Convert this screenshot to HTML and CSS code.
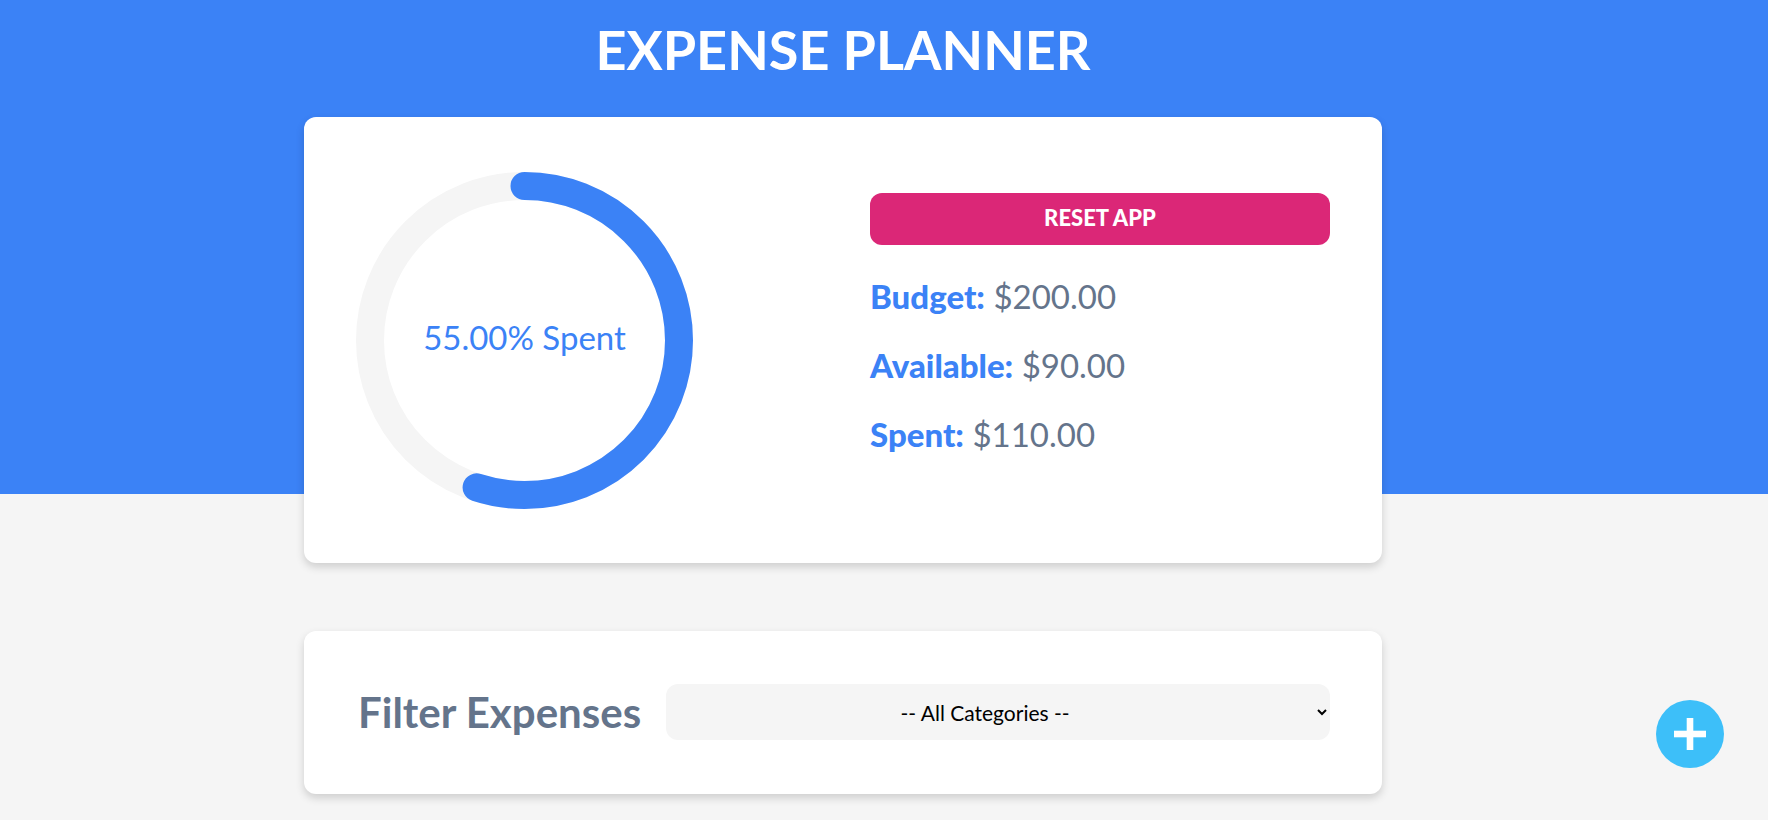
FILE: index.html
```html
<!DOCTYPE html>
<html lang="en">
<head>
<meta charset="utf-8">
<title>Expense Planner</title>
<link rel="stylesheet" href="styles.css">
</head>
<body>
<div class="top">
  <div class="container">
    <h1 class="title">EXPENSE PLANNER</h1>
    <section class="card budget-card">
      <div class="ring">
        <svg class="ring-svg" width="337" height="337" viewBox="0 0 337 337">
          <circle cx="168.5" cy="168.5" r="154.5" fill="none" stroke="#f5f5f5" stroke-width="28"/>
          <circle cx="168.5" cy="168.5" r="154.5" fill="none" stroke="#3b82f6" stroke-width="28" stroke-linecap="round" stroke-dasharray="533.9 1000" transform="rotate(-90 168.5 168.5)"/>
        </svg>
        <p class="ring-label">55.00% Spent</p>
      </div>
      <div class="summary">
        <button class="reset-btn" type="button">Reset App</button>
        <p class="stat"><span class="stat-key">Budget:</span> $200.00</p>
        <p class="stat"><span class="stat-key">Available:</span> $90.00</p>
        <p class="stat"><span class="stat-key">Spent:</span> $110.00</p>
      </div>
    </section>
  </div>
</div>
<main class="container">
  <section class="card filter-card">
    <label class="filter-label" for="filter">Filter Expenses</label>
    <select id="filter" class="filter-select">
      <option>-- All Categories --</option>
    </select>
  </section>
</main>
<button class="add-btn" type="button" aria-label="New expense">
  <svg width="32" height="32" viewBox="0 0 32 32"><rect x="0" y="12.7" width="32" height="6.6" fill="#fff"/><rect x="12.7" y="0" width="6.6" height="32" fill="#fff"/></svg>
</button>
</body>
</html>
```

FILE: styles.css
```css
* { box-sizing: border-box; }
html, body { margin: 0; padding: 0; }
body {
  background: #f5f5f5;
  font-family: Lato, "Noto Sans", sans-serif;
  color: #64748b;
}
.top {
  background: linear-gradient(to bottom, #3b82f6 494px, transparent 494px);
}
.container {
  width: 1078px;
  margin-left: 304px;
}
.title {
  margin: 0;
  padding-top: 21px;
  font-size: 54px;
  line-height: 57px;
  font-weight: 700;
  color: #fff;
  text-align: center;
}
.card {
  background: #fff;
  border-radius: 12px;
  box-shadow: 0 4px 8px rgba(0, 0, 0, 0.16);
}
.budget-card {
  margin-top: 39px;
  padding: 55px 52px 54px;
  display: grid;
  grid-template-columns: 460px 460px;
  column-gap: 54px;
}
.ring {
  display: grid;
  width: 337px;
  height: 337px;
}
.ring > * { grid-area: 1 / 1; }
.ring-svg { display: block; }
.ring-label {
  margin: 0;
  align-self: center;
  justify-self: center;
  padding-bottom: 8px;
  font-size: 33px;
  font-weight: 400;
  color: #3b82f6;
}
.summary {
  padding-top: 21px;
}
.reset-btn {
  display: block;
  width: 100%;
  height: 52px;
  border: none;
  border-radius: 12px;
  background: #db2777;
  color: #fff;
  font-family: Lato, sans-serif;
  font-size: 22px;
  font-weight: 900;
  text-transform: uppercase;
  margin-bottom: 31px;
  padding: 0 0 3px;
}
.stat {
  margin: 0 0 29px;
  font-size: 33px;
  line-height: 40px;
  font-weight: 400;
  color: #64748b;
}
.stat-key {
  font-weight: 900;
  color: #3b82f6;
}
main.container {
  margin-top: 68px;
  padding-bottom: 40px;
}
.filter-card {
  display: flex;
  align-items: center;
  gap: 25px;
  padding: 53px 52px 54px 54px;
}
.filter-label {
  font-size: 42px;
  font-weight: 700;
  color: #64748b;
  white-space: nowrap;
}
.filter-select {
  flex: 1;
  height: 56px;
  border: none;
  border-radius: 12px;
  background-color: #f5f5f5;
  font-family: Lato, sans-serif;
  font-size: 21px;
  color: #000;
  text-align: center;
  text-align-last: center;
  padding: 0 14px 0 0;
}
.add-btn {
  position: fixed;
  right: 44px;
  bottom: 52px;
  width: 68px;
  height: 68px;
  border: none;
  border-radius: 50%;
  background: #3dbff9;
  padding: 0;
  display: flex;
  align-items: center;
  justify-content: center;
}
.add-btn svg { display: block; }
```
